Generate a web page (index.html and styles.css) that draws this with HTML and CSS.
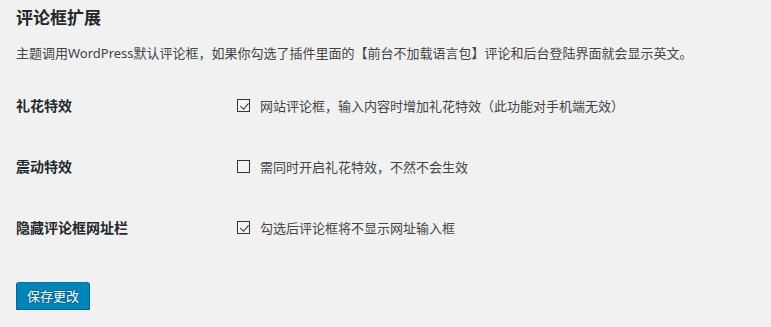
FILE: index.html
```html
<!DOCTYPE html>
<html lang="zh-CN">
<head>
<meta charset="utf-8">
<link rel="stylesheet" href="styles.css">
</head>
<body>
<div class="wrap">
  <h2 class="title">评论框扩展</h2>
  <p class="desc">主题调用WordPress默认评论框，如果你勾选了插件里面的【前台不加载语言包】评论和后台登陆界面就会显示英文。</p>
  <div class="form-table">
    <div class="row">
      <div class="th">礼花特效</div>
      <label class="td"><span class="cb checked"></span><span class="lbl">网站评论框，输入内容时增加礼花特效（此功能对手机端无效）</span></label>
    </div>
    <div class="row">
      <div class="th">震动特效</div>
      <label class="td"><span class="cb"></span><span class="lbl">需同时开启礼花特效，不然不会生效</span></label>
    </div>
    <div class="row">
      <div class="th">隐藏评论框网址栏</div>
      <label class="td"><span class="cb checked"></span><span class="lbl">勾选后评论框将不显示网址输入框</span></label>
    </div>
  </div>
  <div class="submit"><button class="button-primary">保存更改</button></div>
</div>
</body>
</html>
```
FILE: styles.css
```css
html, body {
  margin: 0;
  padding: 0;
  background: #f1f1f1;
}
body {
  font-family: "Noto Sans", "Noto Sans CJK SC", sans-serif;
  color: #444;
  font-size: 13px;
}
.wrap {
  padding: 7px 16px 0 16px;
}
.title {
  margin: 0;
  font-size: 17px;
  line-height: 22px;
  font-weight: 700;
  color: #23282d;
}
.desc {
  margin: 14px 0 0 0;
  line-height: 20px;
}
.form-table {
  margin-top: 12px;
  display: flex;
  flex-direction: column;
}
.row {
  display: flex;
  align-items: center;
  height: 61px;
}
.th {
  width: 221px;
  font-size: 14px;
  font-weight: 700;
  color: #23282d;
  line-height: 18px;
}
.td {
  display: flex;
  align-items: center;
  line-height: 18px;
}
.cb {
  width: 11px;
  height: 11px;
  border: 1px solid #333;
  background: #f4f4f4;
  position: relative;
  margin-right: 10px;
}
.cb.checked::after {
  content: "";
  position: absolute;
  left: 3.5px;
  top: 0.5px;
  width: 3.5px;
  height: 7px;
  border-right: 1.5px solid #333;
  border-bottom: 1.5px solid #333;
  transform: rotate(40deg);
}
.lbl {
  color: #444;
}
.submit {
  margin-top: 24px;
}
.button-primary {
  font-family: "Noto Sans", "Noto Sans CJK SC", sans-serif;
  font-size: 13px;
  height: 28px;
  width: 74px;
  padding: 0 10px 1px;
  line-height: 24px;
  background: #0085ba;
  color: #fff;
  border: 1px solid #0073aa;
  border-color: #0073aa #006799 #006799;
  border-radius: 3px;
  box-shadow: 0 1px 0 #006799;
  text-shadow: 0 -1px 1px #006799, 1px 0 1px #006799, 0 1px 1px #006799, -1px 0 1px #006799;
  cursor: pointer;
}
```
